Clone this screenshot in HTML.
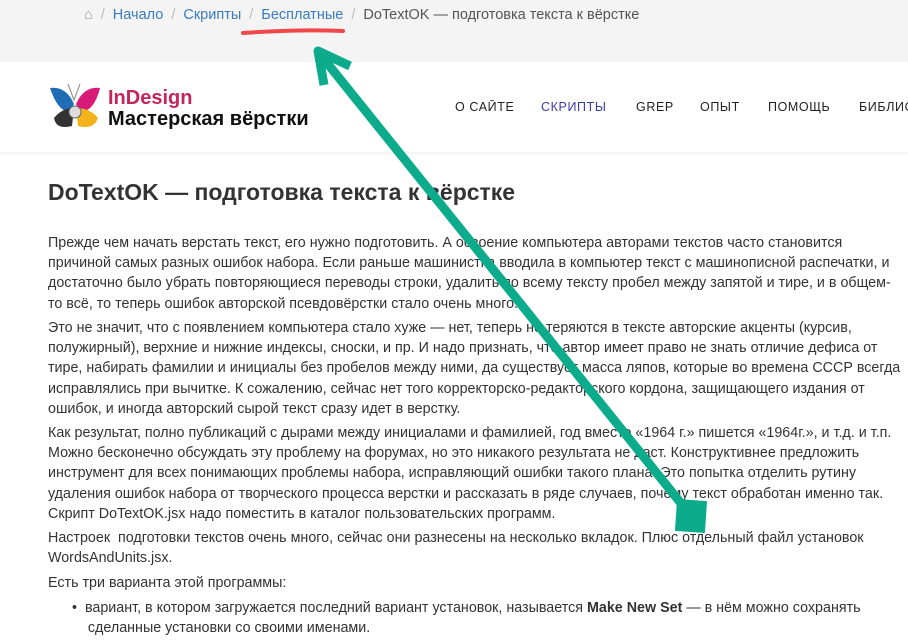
<!DOCTYPE html>
<html><head><meta charset="utf-8"><style>
html,body{margin:0;width:908px;height:640px;overflow:hidden}
body{background:#fff;font-family:"Liberation Sans",Arial,sans-serif;position:relative}
.top{position:absolute;left:0;top:0;width:908px;height:62px;background:#f4f4f4}
.bc{position:absolute;left:84px;top:7px;font-size:14.5px;color:#555;white-space:nowrap}
.bc a{color:#3a7bbf;text-decoration:none}
.bc .s{color:#bbb;margin:0 8px}
.nav{position:absolute;left:0;top:62px;width:908px;height:90px;background:#fff;box-shadow:0 2px 3px rgba(0,0,0,.06)}
.menu{position:absolute;top:100px;left:0;width:908px;height:20px;overflow:hidden;font-size:12.5px;letter-spacing:0.6px;color:#222;white-space:nowrap}
.menu span{position:absolute}
.logo1{position:absolute;left:108px;top:87px;font-size:20px;font-weight:bold;color:#c3265a}
.logo2{position:absolute;left:108px;top:108px;font-size:20px;font-weight:bold;color:#111}
h1{position:absolute;left:48px;top:179px;margin:0;font-size:23px;color:#333;white-space:nowrap}
.t{position:absolute;left:48px;font-size:14.3px;color:#333;line-height:20.2px;white-space:nowrap}
</style></head><body>
<div class="top"></div>
<div class="bc"><span style="color:#999">&#8962;</span><span class="s">/</span><a>Начало</a><span class="s">/</span><a>Скрипты</a><span class="s">/</span><a>Бесплатные</a><span class="s">/</span>DoTextOK — подготовка текста к вёрстке</div>
<div class="nav"></div>
<svg style="position:absolute;left:48px;top:82px" width="56" height="48" viewBox="0 0 56 48">
<path d="M20 2 L26 18 L32 2" stroke="#999" fill="none" stroke-width="1.2"/>
<path d="M2 6 Q18 4 26 22 L22 30 Q10 30 2 6Z" fill="#1e6db5"/>
<path d="M52 6 Q36 4 28 22 L32 30 Q46 30 52 6Z" fill="#d81b78"/>
<path d="M6 36 Q14 26 26 26 L24 44 Q8 48 6 36Z" fill="#333"/>
<path d="M50 36 Q42 26 28 26 L30 44 Q46 48 50 36Z" fill="#f2b31b"/>
<circle cx="27" cy="30" r="6" fill="#ddd" stroke="#666"/>
</svg>
<div class="logo1">InDesign</div>
<div class="logo2">Мастерская вёрстки</div>
<div class="menu"><span style="left:455px">О САЙТЕ</span><span style="left:541px;color:#3d3da8">СКРИПТЫ</span><span style="left:636px">GREP</span><span style="left:700px">ОПЫТ</span><span style="left:768px">ПОМОЩЬ</span><span style="left:859px">БИБЛИОТЕКА</span></div>
<h1>DoTextOK — подготовка текста к вёрстке</h1>
<div class="t" style="top:233px">Прежде чем начать верстать текст, его нужно подготовить. А освоение компьютера авторами текстов часто становится<br>причиной самых разных ошибок набора. Если раньше машинистка вводила в компьютер текст с машинописной распечатки, и<br>достаточно было убрать повторяющиеся переводы строки, удалить по всему тексту пробел между запятой и тире, и в общем-<br>то всё, то теперь ошибок авторской псевдовёрстки стало очень много.</div>
<div class="t" style="top:318px">Это не значит, что с появлением компьютера стало хуже — нет, теперь не теряются в тексте авторские акценты (курсив,<br>полужирный), верхние и нижние индексы, сноски, и пр. И надо признать, что автор имеет право не знать отличие дефиса от<br>тире, набирать фамилии и инициалы без пробелов между ними, да существует масса ляпов, которые во времена СССР всегда<br>исправлялись при вычитке. К сожалению, сейчас нет того корректорско-редакторского кордона, защищающего издания от<br>ошибок, и иногда авторский сырой текст сразу идет в верстку.</div>
<div class="t" style="top:423px">Как результат, полно публикаций с дырами между инициалами и фамилией, год вместо «1964 г.» пишется «1964г.», и т.д. и т.п.<br>Можно бесконечно обсуждать эту проблему на форумах, но это никакого результата не даст. Конструктивнее предложить<br>инструмент для всех понимающих проблемы набора, исправляющий ошибки такого плана. Это попытка отделить рутину<br>удаления ошибок набора от творческого процесса верстки и рассказать в ряде случаев, почему текст обработан именно так.<br>Скрипт DoTextOK.jsx надо поместить в каталог пользовательских программ.</div>
<div class="t" style="top:528px">Настроек &nbsp;подготовки текстов очень много, сейчас они разнесены на несколько вкладок. Плюс отдельный файл установок<br>WordsAndUnits.jsx.</div>
<div class="t" style="top:573px">Есть три варианта этой программы:</div>
<div class="t" style="top:598px;left:72px">•&nbsp;&nbsp;вариант, в котором загружается последний вариант установок, называется <b>Make New Set</b> — в нём можно сохранять<br>&nbsp;&nbsp;&nbsp;&nbsp;сделанные установки со своими именами.</div>
<svg style="position:absolute;left:0;top:0" width="908" height="640">
<path d="M243 33 Q300 29 343 31" stroke="#f04848" stroke-width="4" fill="none" stroke-linecap="round"/>
<line x1="319" y1="53" x2="688" y2="512" stroke="#0cab8c" stroke-width="9"/>
<path d="M350 66 L318 51 L324 85" stroke="#0cab8c" stroke-width="9" fill="none" stroke-linejoin="round"/>
<rect x="676" y="500" width="30" height="32" fill="#0cab8c" transform="rotate(4 691 516)"/>
</svg>
</body></html>
